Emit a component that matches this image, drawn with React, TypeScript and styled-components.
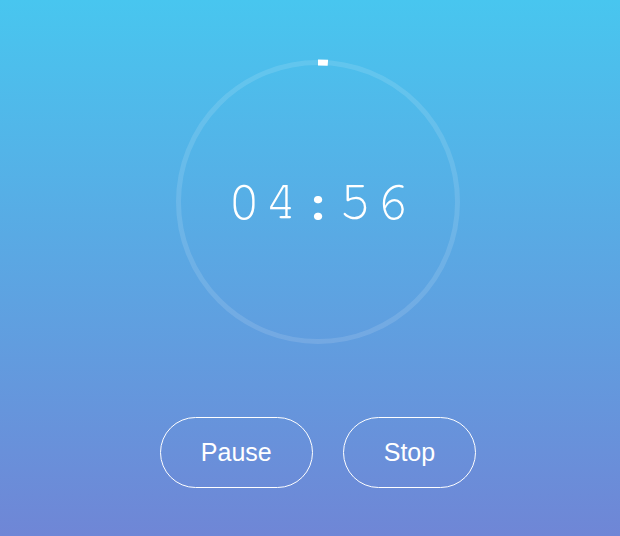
import React from "react";
import styled, { createGlobalStyle } from "styled-components";

const Global = createGlobalStyle`
  html, body { margin: 0; padding: 0; }
  body { font-family: "Liberation Sans", Arial, sans-serif; }
`;

const Page = styled.div`
  width: 620px;
  height: 536px;
  box-sizing: border-box;
  padding-left: 16px;
  background: linear-gradient(to bottom, #48c6ef 0%, #6f86d6 100%);
  display: flex;
  flex-direction: column;
  align-items: center;
  overflow: hidden;
`;

const Dial = styled.div`
  position: relative;
  width: 290px;
  height: 290px;
  margin-top: 57px;
  display: flex;
  align-items: center;
  justify-content: center;
`;

const Ring = styled.svg`
  position: absolute;
  inset: 0;
`;

const Time = styled.div`
  position: relative;
  font-family: "FreeMono", "Liberation Mono", "Courier New", monospace;
  font-size: 56px;
  color: #fff;
  letter-spacing: 3.4px;
  padding-left: 3.4px;
  line-height: 1;
`;

const Controls = styled.div`
  display: flex;
  gap: 30px;
  margin-top: 70px;
`;

const PillButton = styled.button`
  font-family: "Liberation Sans", Arial, sans-serif;
  font-size: 25px;
  line-height: 29px;
  color: #fff;
  background: transparent;
  border: 1px solid #fff;
  border-radius: 40px;
  padding: 20px 40px;
  cursor: pointer;
`;

const R = 139.5;
const C = 2 * Math.PI * R;

export default function App() {
  const total = 300;
  const remaining = 296;
  const progress = (total - remaining) / total;
  return (
    <>
      <Global />
      <Page>
        <Dial>
          <Ring width="290" height="290" viewBox="0 0 290 290">
            <circle cx="145" cy="145" r={R} fill="none" stroke="rgba(255,255,255,0.12)" strokeWidth="5" />
            <circle
              cx="145"
              cy="145"
              r={R}
              fill="none"
              stroke="#fff"
              strokeWidth="6"
              strokeDasharray={`${C * progress * 0.85} ${C}`}
              transform="rotate(-90 145 145)"
            />
          </Ring>
          <Time>04:56</Time>
        </Dial>
        <Controls>
          <PillButton>Pause</PillButton>
          <PillButton>Stop</PillButton>
        </Controls>
      </Page>
    </>
  );
}
